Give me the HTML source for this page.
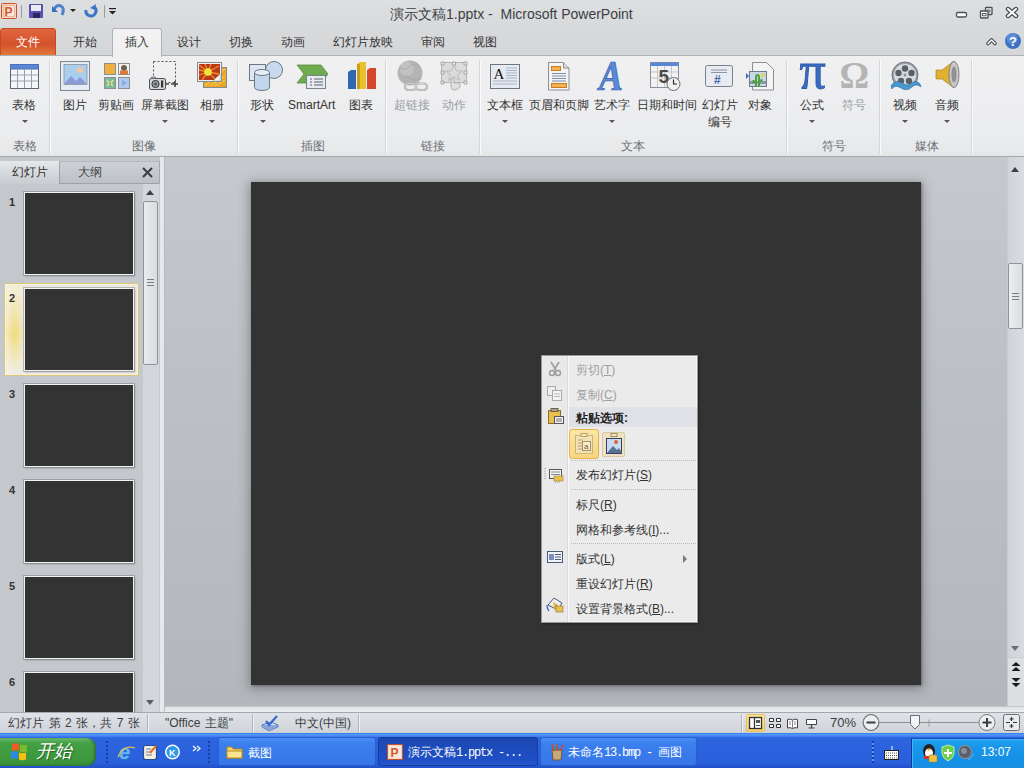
<!DOCTYPE html>
<html><head><meta charset="utf-8">
<style>
*{box-sizing:border-box}
html,body{margin:0;padding:0}
body{width:1024px;height:768px;overflow:hidden;position:relative;font-family:"Liberation Sans",sans-serif;font-size:12px;color:#333;background:#c2c6cb}
.a{position:absolute}
.t{position:absolute;white-space:nowrap;line-height:1}
.c{display:inline-block;width:1em;text-align:center;white-space:nowrap}
#title{left:0;top:0;width:1024px;height:56px;background:linear-gradient(#dedfe1,#d9dadc 40%,#d4d6d8)}
#ribbon{left:0;top:55px;width:1024px;height:102px;background:linear-gradient(#f0f0f1,#ebecee 80%,#e6e7e9);border-top:1px solid #aeb1b5;border-bottom:1px solid #a4a7ab}
.sep{position:absolute;top:60px;width:2px;height:94px;border-left:1px solid #d3d6da;border-right:1px solid #fbfbfc}
.glab{position:absolute;top:140px;color:#6d7075;font-size:12px;line-height:12px;white-space:nowrap}
.lab{position:absolute;top:99px;color:#333;font-size:12px;line-height:12px;white-space:nowrap}
.dis{color:#9a9da2}
.arr{position:absolute;width:0;height:0;border-left:3px solid transparent;border-right:3px solid transparent;border-top:3px solid #555}
.tab{position:absolute;top:36px;font-size:12px;line-height:12px;color:#333;white-space:nowrap}
#left{left:0;top:157px;width:160px;height:555px;background:#c4c7cb}
.thumb{position:absolute;left:24px;width:110px;height:83px;background:#333;border:1px solid #f2f2f2;box-shadow:0 0 0 1px rgba(90,94,100,.35),1px 1px 2px rgba(0,0,0,.25)}
.num{position:absolute;left:9px;font-weight:bold;font-size:11px;line-height:12px;color:#333}
#slide{left:251px;top:182px;width:670px;height:503px;background:#333333;box-shadow:0 2px 10px 2px rgba(70,74,80,.45),1px 1px 2px rgba(0,0,0,.3)}
#status{left:0;top:712px;width:1024px;height:21px;background:linear-gradient(#dfe2e6,#cfd3d8);border-top:1px solid #a4a8ae}
#task{left:0;top:733px;width:1024px;height:35px;background:linear-gradient(#3c81f3,#2d64e0 15%,#2a5fdc 85%,#2050c8)}
.mi{position:absolute;left:576px;font-size:12px;line-height:12px;color:#333;white-space:nowrap}
.msep{position:absolute;left:571px;width:125px;height:1px;border-top:1px dotted #b8bbc0}
</style></head><body>

<!-- title bar & tabs -->
<div id="title" class="a"></div>

<!-- QAT -->
<svg class="a" style="left:0;top:0" width="125" height="24">
 <rect x="1.5" y="3.5" width="15" height="15" rx="1" fill="#f4d8c4" stroke="#c9502a"/>
 <rect x="3.5" y="5.5" width="11" height="11" fill="#f8e6da" stroke="#e89870" stroke-width=".6"/>
 <text x="4.5" y="15.5" font-family="Liberation Sans" font-weight="bold" font-size="12" fill="#d4572a">P</text>
 <line x1="21.5" y1="5" x2="21.5" y2="18" stroke="#9a9ea4"/>
 <rect x="29" y="4" width="14" height="14" rx="1" fill="#5a4fb0"/>
 <rect x="31" y="5" width="10" height="6" fill="#e8ecf4"/>
 <rect x="33" y="13" width="7" height="5" fill="#2a2a60"/>
 <path d="M54 10 q2-6 7-4 q4 2 1 9" fill="none" stroke="#4a82d0" stroke-width="3"/>
 <path d="M52 6 l0 6 l6 0z" fill="#3a6fc0"/>
 <path d="M70 9 h6 l-3 3z" fill="#222"/>
 <path d="M86 10 a5 5 0 1 0 8 -3" fill="none" stroke="#3b73c9" stroke-width="3"/>
 <path d="M96 4 l-1 6 l-5 -2z" fill="#3b73c9"/>
 <line x1="104.5" y1="5" x2="104.5" y2="18" stroke="#9a9ea4"/>
 <rect x="109" y="8" width="7" height="1.2" fill="#222"/>
 <path d="M109 11 h7 l-3.5 3.5z" fill="#222"/>
</svg>
<!-- window controls -->
<svg class="a" style="left:950px;top:0" width="74" height="56">
 <rect x="6.5" y="12.5" width="10" height="4.5" rx="1.5" fill="#fff" stroke="#4a4d52" stroke-width="1.3"/>
 <rect x="35.5" y="7.5" width="6.5" height="7" rx=".5" fill="#fff" stroke="#4a4d52" stroke-width="1.3"/>
 <rect x="37.5" y="10" width="2.5" height="2" fill="none" stroke="#4a4d52" stroke-width=".9"/>
 <rect x="30.5" y="11" width="7.5" height="7" rx=".5" fill="#fff" stroke="#4a4d52" stroke-width="1.3"/>
 <rect x="32.5" y="13.5" width="3.5" height="2.3" fill="none" stroke="#4a4d52" stroke-width=".9"/>
 <path d="M58 9 l8 7 M66 9 l-8 7" stroke="#4a4d52" stroke-width="4.4" stroke-linecap="round"/>
 <path d="M58 9 l8 7 M66 9 l-8 7" stroke="#fff" stroke-width="2" stroke-linecap="round"/>
 <path d="M38 43.5 l3.5-3.5 l3.5 3.5" fill="none" stroke="#4a4d52" stroke-width="3.6" stroke-linecap="round" stroke-linejoin="round"/>
 <path d="M38 43.5 l3.5-3.5 l3.5 3.5" fill="none" stroke="#fff" stroke-width="1.4" stroke-linecap="round" stroke-linejoin="round"/>
 <circle cx="63" cy="41" r="8" fill="#3f72c4"/>
 <circle cx="62" cy="38.5" r="5.5" fill="#7aa4e4" opacity=".5"/>
 <text x="59" y="46" font-family="Liberation Sans" font-weight="bold" font-size="13" fill="#fff">?</text>
</svg>

<div class="t" style="left:390px;top:7px;font-size:14px;color:#3b3f45"><span class="c">演</span><span class="c">示</span><span class="c">文</span><span class="c">稿</span>1.pptx - &nbsp;Microsoft PowerPoint</div>

<div class="a" style="left:0;top:28px;width:56px;height:28px;background:linear-gradient(#e0673d,#d4512b 60%,#e07a3c);border-radius:3px 3px 0 0;border:1px solid #c24a25"></div>
<div class="tab" style="left:16px;color:#fff"><span class="c">文</span><span class="c">件</span></div>
<div class="a" style="left:112px;top:28px;width:50px;height:29px;background:linear-gradient(#f2f2f3,#f0f0f1);border:1px solid #aeb1b5;border-bottom:none;border-radius:3px 3px 0 0;z-index:2"></div>
<div class="tab" style="left:73px"><span class="c">开</span><span class="c">始</span></div>
<div class="tab" style="left:125px;z-index:3"><span class="c">插</span><span class="c">入</span></div>
<div class="tab" style="left:177px"><span class="c">设</span><span class="c">计</span></div>
<div class="tab" style="left:229px"><span class="c">切</span><span class="c">换</span></div>
<div class="tab" style="left:281px"><span class="c">动</span><span class="c">画</span></div>
<div class="tab" style="left:333px"><span class="c">幻</span><span class="c">灯</span><span class="c">片</span><span class="c">放</span><span class="c">映</span></div>
<div class="tab" style="left:421px"><span class="c">审</span><span class="c">阅</span></div>
<div class="tab" style="left:473px"><span class="c">视</span><span class="c">图</span></div>

<!-- ribbon -->
<div id="ribbon" class="a"></div>
<!-- ribbon separators -->
<div class="sep" style="left:49px"></div>
<div class="sep" style="left:237px"></div>
<div class="sep" style="left:385px"></div>
<div class="sep" style="left:479px"></div>
<div class="sep" style="left:786px"></div>
<div class="sep" style="left:879px"></div>
<div class="sep" style="left:971px"></div>
<!-- group labels -->
<div class="glab" style="left:13px"><span class="c">表</span><span class="c">格</span></div>
<div class="glab" style="left:132px"><span class="c">图</span><span class="c">像</span></div>
<div class="glab" style="left:301px"><span class="c">插</span><span class="c">图</span></div>
<div class="glab" style="left:421px"><span class="c">链</span><span class="c">接</span></div>
<div class="glab" style="left:621px"><span class="c">文</span><span class="c">本</span></div>
<div class="glab" style="left:822px"><span class="c">符</span><span class="c">号</span></div>
<div class="glab" style="left:915px"><span class="c">媒</span><span class="c">体</span></div>
<!-- labels -->
<div class="lab" style="left:12px"><span class="c">表</span><span class="c">格</span></div>
<div class="lab" style="left:63px"><span class="c">图</span><span class="c">片</span></div>
<div class="lab" style="left:98px"><span class="c">剪</span><span class="c">贴</span><span class="c">画</span></div>
<div class="lab" style="left:141px"><span class="c">屏</span><span class="c">幕</span><span class="c">截</span><span class="c">图</span></div>
<div class="lab" style="left:200px"><span class="c">相</span><span class="c">册</span></div>
<div class="lab" style="left:250px"><span class="c">形</span><span class="c">状</span></div>
<div class="lab" style="left:288px;font-size:12px">SmartArt</div>
<div class="lab" style="left:349px"><span class="c">图</span><span class="c">表</span></div>
<div class="lab dis" style="left:394px"><span class="c">超</span><span class="c">链</span><span class="c">接</span></div>
<div class="lab dis" style="left:442px"><span class="c">动</span><span class="c">作</span></div>
<div class="lab" style="left:487px"><span class="c">文</span><span class="c">本</span><span class="c">框</span></div>
<div class="lab" style="left:529px"><span class="c">页</span><span class="c">眉</span><span class="c">和</span><span class="c">页</span><span class="c">脚</span></div>
<div class="lab" style="left:594px"><span class="c">艺</span><span class="c">术</span><span class="c">字</span></div>
<div class="lab" style="left:637px"><span class="c">日</span><span class="c">期</span><span class="c">和</span><span class="c">时</span><span class="c">间</span></div>
<div class="lab" style="left:702px"><span class="c">幻</span><span class="c">灯</span><span class="c">片</span></div>
<div class="lab" style="left:708px;top:116px"><span class="c">编</span><span class="c">号</span></div>
<div class="lab" style="left:748px"><span class="c">对</span><span class="c">象</span></div>
<div class="lab" style="left:800px"><span class="c">公</span><span class="c">式</span></div>
<div class="lab dis" style="left:842px"><span class="c">符</span><span class="c">号</span></div>
<div class="lab" style="left:893px"><span class="c">视</span><span class="c">频</span></div>
<div class="lab" style="left:935px"><span class="c">音</span><span class="c">频</span></div>
<!-- dropdown arrows -->
<div class="arr" style="left:22px;top:120px"></div>
<div class="arr" style="left:162px;top:120px"></div>
<div class="arr" style="left:209px;top:120px"></div>
<div class="arr" style="left:260px;top:120px"></div>
<div class="arr" style="left:502px;top:120px"></div>
<div class="arr" style="left:609px;top:120px"></div>
<div class="arr" style="left:809px;top:120px"></div>
<div class="arr" style="left:902px;top:120px"></div>
<div class="arr" style="left:944px;top:120px"></div>

<!-- icons -->
<svg class="a" style="left:0;top:56px" width="1024" height="40">
 <!-- table -->
 <rect x="10.5" y="8.5" width="28" height="24" fill="#f4f6f9" stroke="#5f6671"/>
 <rect x="10.5" y="8.5" width="28" height="4.5" fill="#5a86d6" stroke="#4a6fb8"/>
 <path d="M17.5 13v19 M24.5 13v19 M31.5 13v19 M11 19h27 M11 25h27" stroke="#9aa1ab"/>
 <!-- picture -->
 <rect x="60.5" y="5.5" width="29" height="29" fill="#e6ecf3" stroke="#7d8590"/>
 <rect x="64" y="8.5" width="23" height="20" fill="#a8d0ee" stroke="#8a929c" stroke-width=".8"/>
 <circle cx="80" cy="14" r="3" fill="#f6c79a"/>
 <path d="M64 28 l7-8 l5 5 l4-4 l7 7z" fill="#8d9ad8"/>
 <!-- clip art -->
 <rect x="104.5" y="7.5" width="11" height="11" fill="#f0b040" stroke="#8a8f96"/>
 <rect x="118.5" y="7.5" width="11" height="11" fill="#f8f0ea" stroke="#8a8f96"/>
 <circle cx="124" cy="12" r="3" fill="#6b6055"/><rect x="120" y="14.5" width="8" height="4" fill="#d87b3a"/>
 <rect x="104.5" y="21.5" width="11" height="11" fill="#78b8a0" stroke="#8a8f96"/>
 <path d="M107 24l2 3M113 24l-2 3M107 30l2-2M113 30l-2-2" stroke="#f3e07a" stroke-width="1.6"/>
 <rect x="118.5" y="21.5" width="11" height="11" fill="#b0c8f0" stroke="#8a8f96"/>
 <path d="M122 24 l5 3 l-5 3z" fill="#8aa8e0"/>
 <!-- screenshot -->
 <rect x="153.5" y="5.5" width="22" height="21" fill="none" stroke="#555" stroke-dasharray="2 2"/>
 <rect x="149.5" y="22.5" width="16" height="11" rx="1.5" fill="#d4d6d9" stroke="#505458"/>
 <rect x="151" y="20.5" width="5" height="2" fill="#8a8e92"/>
 <circle cx="155.5" cy="28" r="3.6" fill="#9a9ea2" stroke="#333"/>
 <circle cx="155.5" cy="28" r="1.5" fill="#555"/>
 <rect x="161" y="24.5" width="2.2" height="7" fill="#333"/>
 <path d="M166 28h3 M171 28h7 M175 25v6" stroke="#444" stroke-width="1.6"/>
 <!-- album -->
 <rect x="203.5" y="11.5" width="23" height="20" fill="#e8a825" stroke="#868a90"/>
 <path d="M205 30 l20 -17 M210 30 l15 -10 M215 30 l10 -6" stroke="#f4c850" stroke-width="1.2"/>
 <rect x="197.5" y="6.5" width="24" height="19" fill="#f0f0f0" stroke="#868a90"/>
 <rect x="199" y="8" width="21" height="16" fill="#b83a18"/>
 <g stroke="#f08a30" stroke-width="1.3">
 <path d="M208 16 l-9 -7 M208 16 l-9 3 M208 16 l-6 8 M208 16 l3 -8 M208 16 l11 -6 M208 16 l11 2 M208 16 l8 8 M208 16 l-3 -8 M208 16 l-9 -2"/>
 </g>
 <circle cx="208" cy="16" r="3.8" fill="#f4e438"/>
 <path d="M213 25 l7-7 v7z" fill="#f8f8f8" stroke="#a0a0a0" stroke-width=".6"/>
 <!-- shapes -->
 <circle cx="274" cy="14" r="8.5" fill="#c8d8ee" stroke="#6d7785"/>
 <rect x="249.5" y="8.5" width="16" height="16" fill="#dde6f2" stroke="#6d7785"/>
 <path d="M254.5 16.5 v15 a7.5 3 0 0 0 15 0 v-15" fill="#c2d6ee" stroke="#6d7785"/>
 <ellipse cx="262" cy="16.5" rx="7.5" ry="3" fill="#e6eef8" stroke="#6d7785"/>
 <!-- smartart -->
 <path d="M297 9 h24 l7 9 l-7 9 h-24 l7-9z" fill="#6eaa4e" stroke="#5a8c40" stroke-width=".8"/>
 <rect x="306.5" y="19.5" width="19" height="13" fill="#e8ecef" stroke="#7c848e"/>
 <path d="M310 23h2 M314 23h9 M310 26h2 M314 26h9 M310 29h2 M314 29h9" stroke="#5a6370"/>
 <!-- chart -->
 <path d="M348 16 l3-2 h5 v19 h-8z" fill="#2f68b0"/>
 <path d="M357 8 l3-2 h6 v27 h-9z" fill="#e8c22a"/>
 <rect x="357" y="8" width="3" height="25" fill="#c9a018"/>
 <path d="M367 14 l3-2 h6 v21 h-9z" fill="#d6462a"/>
 <!-- hyperlink (disabled) -->
 <circle cx="410" cy="17" r="12.5" fill="#b4b4b4"/>
 <circle cx="407" cy="13" r="7" fill="#c8c8c8" opacity=".7"/>
 <path d="M400 12q6 3 10-2q4-4 9 1M402 22q5-3 9 1q4 3 10-1" fill="none" stroke="#a4a4a4" stroke-width=".8"/>
 <rect x="405" y="27.5" width="11" height="6.5" rx="3.2" fill="none" stroke="#a8a8a8" stroke-width="2.2"/>
 <rect x="416" y="27.5" width="11" height="6.5" rx="3.2" fill="none" stroke="#a8a8a8" stroke-width="2.2"/>
 <rect x="405" y="27.5" width="11" height="6.5" rx="3.2" fill="none" stroke="#dedede" stroke-width=".8"/>
 <rect x="416" y="27.5" width="11" height="6.5" rx="3.2" fill="none" stroke="#dedede" stroke-width=".8"/>
 <!-- action (disabled) -->
 <rect x="441.5" y="6.5" width="25" height="20" fill="#dcdcdc" stroke="#a8a8a8" stroke-width=".8"/>
 <path d="M441 6h3v3h-3zM452.5 6h3v3h-3zM464 6h3v3h-3zM441 15h3v3h-3zM464 15h3v3h-3zM441 25h3v3h-3zM464 25h3v3h-3z" fill="#e8e8e8" stroke="#999" stroke-width=".8"/>
 <path d="M454 9 l2.5 6 h6 l-5 3.5 l2 6 l-5.5-4 l-5.5 4 l2-6 l-5-3.5 h6z" fill="none" stroke="#bbb"/>
 <path d="M451 30 v-7 q1.5-2 3 0 v4 q3-1 6 1 v3 q-2 3-6 3 q-3 0-3-4z" fill="#e0e0e0" stroke="#a5a5a5" stroke-width=".8"/>
 <!-- text box -->
 <rect x="490.5" y="8.5" width="29" height="24" fill="#e6eaf2" stroke="#6e7680"/>
 <text x="493.5" y="23" font-family="Liberation Serif" font-size="15" fill="#111">A</text>
 <path d="M506 12h11 M506 14.5h11 M506 17h11 M506 19.5h11 M506 22h11 M493 25h24 M493 28h24" stroke="#98a4b8" stroke-width=".8"/>
 <!-- header footer -->
 <path d="M548.5 6.5 h15 l5.5 5.5 v22 h-20.5z" fill="#f4f4f4" stroke="#8a8f96"/>
 <path d="M563.5 6.5 v5.5 h5.5" fill="#ddd" stroke="#8a8f96"/>
 <rect x="551.5" y="10.5" width="9" height="4" fill="#f1b352" stroke="#d07a20"/>
 <path d="M552 17.5h14 M552 20h14 M552 22.5h14 M552 25h14" stroke="#7a8aa8"/>
 <rect x="551.5" y="27.5" width="15" height="4" fill="#f1b352" stroke="#d07a20"/>
 <!-- wordart -->
 <text transform="translate(599 34) scale(.85 1)" font-family="Liberation Serif" font-weight="bold" font-style="italic" font-size="42" fill="#5a8ad8" stroke="#2f5aa0" stroke-width=".7">A</text>
 <!-- date time -->
 <rect x="650.5" y="6.5" width="28" height="25" fill="#f2f2f2" stroke="#8a8f96"/>
 <rect x="650.5" y="6.5" width="28" height="3.5" fill="#5a86d6"/>
 <path d="M657.5 10v21 M664.5 10v21 M671.5 10v21 M651 16h27 M651 22h27" stroke="#c2c6cc"/>
 <text x="658.5" y="26.5" font-family="Liberation Sans" font-weight="bold" font-size="19" fill="#4a4a4a">5</text>
 <circle cx="673.5" cy="28" r="6.5" fill="#f0f0f0" stroke="#6a6e74"/>
 <path d="M673.5 23.5v4.5h3.5" stroke="#222" fill="none" stroke-width="1.1"/>
 <!-- slide number -->
 <rect x="705.5" y="9.5" width="27" height="21" rx="2" fill="#e8ecf2" stroke="#7a818a"/>
 <path d="M711 14h16 M711 16.5h16" stroke="#8894a8"/>
 <text x="714" y="28" font-family="Liberation Sans" font-weight="bold" font-size="12" fill="#4a68a8">#</text>
 <!-- object -->
 <path d="M752.5 6.5 h14 l7 7 v20.5 h-21z" fill="#f4f4f4" stroke="#8a8f96"/>
 <rect x="749.5" y="15.5" width="17" height="15" fill="#c8d8e8" stroke="#6f7a88"/>
 <rect x="750" y="25" width="16" height="3" fill="#8a9ab0"/>
 <path d="M756 31v-10q0-2 1.5-2t1.5 2v10M753.5 24v2h2.5M761.5 23v2h-2.5" stroke="#50a040" stroke-width="2" fill="none"/>
 <circle cx="763" cy="19" r="2" fill="#e8d050"/>
 <path d="M746 17 l3 3 l-3 3z" fill="#3a6fc0"/>
 <!-- pi -->
 <text transform="translate(799.5 32.2)" font-family="Liberation Serif" font-size="52" fill="#3a6cc2" stroke="#2d5aa8" stroke-width=".9">π</text>
 <!-- omega -->
 <text x="839.5" y="32" font-family="Liberation Serif" font-weight="bold" font-size="37" fill="#b4b4b4">Ω</text>
 <!-- video -->
 <g transform="translate(0 2)">
 <circle cx="905" cy="17" r="13" fill="#9aa0a6" stroke="#70767d"/>
 <circle cx="905" cy="17" r="11" fill="#d8dce0"/>
 <circle cx="905" cy="10.5" r="3.2" fill="#5a6068"/><circle cx="911.5" cy="15" r="3.2" fill="#5a6068"/><circle cx="909" cy="23" r="3.2" fill="#5a6068"/><circle cx="901" cy="23" r="3.2" fill="#5a6068"/><circle cx="898.5" cy="15" r="3.2" fill="#5a6068"/>
 <circle cx="905" cy="17" r="1.5" fill="#8a9098"/>
 <path d="M891 28 q4-7 11-3 q6 4 10 0 q4-4 8 1 l1 3 q-5-4-9 0 q-5 5-11 1 q-6-4-9 1z" fill="#4a98d0" stroke="#2a6aa0" stroke-width=".6"/>
 </g>
 <!-- audio -->
 <path d="M936 14 h6 l12-9 v27 l-12-9 h-6z" fill="#e0b030" stroke="#9a7a20" stroke-width=".6"/>
 <ellipse cx="954" cy="18.5" rx="5" ry="13" fill="#c8c8c8" stroke="#808080"/>
 <ellipse cx="954" cy="18.5" rx="2.5" ry="8" fill="#909090"/>
</svg>


<!-- left panel -->
<div id="left" class="a"></div>
<!-- left panel tabs -->
<div class="a" style="left:0;top:161px;width:60px;height:23px;background:linear-gradient(#e6e8eb,#d3d6da 60%,#c9cdd1)"></div>
<div class="a" style="left:59px;top:161px;width:61px;height:23px;background:linear-gradient(#cdd1d5,#bdc1c6);border:1px solid #9fa3a9;border-top-color:#b5b9be"></div>
<div class="a" style="left:119px;top:161px;width:41px;height:23px;background:linear-gradient(#cdd1d5,#bdc1c6);border-bottom:1px solid #9fa3a9;border-top:1px solid #b5b9be;border-right:1px solid #a5a9ae"></div>
<div class="t" style="left:12px;top:166px;color:#333"><span class="c">幻</span><span class="c">灯</span><span class="c">片</span></div>
<div class="t" style="left:78px;top:166px;color:#444"><span class="c">大</span><span class="c">纲</span></div>
<svg class="a" style="left:141px;top:166px" width="14" height="14"><path d="M2 2l9 9M11 2l-9 9" stroke="#3a3d42" stroke-width="2"/></svg>
<!-- scrollbar -->
<div class="a" style="left:142px;top:184px;width:17px;height:528px;background:#d3d6da;border-left:1px solid #c4c8cc"></div>
<div class="a" style="left:146px;top:190px;width:0;height:0;border-left:4px solid transparent;border-right:4px solid transparent;border-bottom:5px solid #3c4046"></div>
<div class="a" style="left:143px;top:201px;width:15px;height:164px;background:linear-gradient(90deg,#e9ebee,#d8dbdf);border:1px solid #8f949a;border-radius:2px"></div>
<div class="a" style="left:147px;top:279px;width:7px;height:7px;border-top:1px solid #7a7e84;border-bottom:1px solid #7a7e84;background:linear-gradient(#0000 2px,#7a7e84 2px,#7a7e84 3px,#0000 3px)"></div>
<div class="a" style="left:146px;top:700px;width:0;height:0;border-left:4px solid transparent;border-right:4px solid transparent;border-top:5px solid #5a5e64"></div>
<!-- selected highlight -->
<div class="a" style="left:4px;top:283px;width:135px;height:93px;border:1px solid #dcc878;border-radius:2px;background:#ebe9e1;box-shadow:inset 0 0 0 1px #f6f2e2"></div>
<div class="a" style="left:5px;top:284px;width:18px;height:91px;background:linear-gradient(90deg,rgba(246,244,236,.7),rgba(246,244,236,0) 45%,rgba(246,244,236,0) 65%,rgba(236,236,230,.6)),linear-gradient(#f4eed8,#f2e6b0 30%,#f0dc84 55%,#f2e6b8 78%,#eeeee6)"></div>
<!-- thumbs -->
<div class="thumb" style="top:192px"></div>
<div class="thumb" style="top:288px"></div>
<div class="thumb" style="top:384px"></div>
<div class="thumb" style="top:480px"></div>
<div class="thumb" style="top:576px"></div>
<div class="thumb" style="top:672px;height:40px;border-bottom:none"></div>
<div class="num" style="top:196px">1</div>
<div class="num" style="top:292px">2</div>
<div class="num" style="top:388px">3</div>
<div class="num" style="top:484px">4</div>
<div class="num" style="top:580px">5</div>
<div class="num" style="top:676px">6</div>


<!-- main -->
<div class="a" style="left:165px;top:157px;width:842px;height:549px;background:linear-gradient(#c5c8cc,#bdc0c4 40%,#b3b6ba)"></div>
<div class="a" style="left:160px;top:157px;width:5px;height:555px;background:#e6e8eb;border-right:1px solid #b7bbc0"></div>
<div id="slide" class="a"></div>
<!-- right scrollbar -->
<div class="a" style="left:1007px;top:157px;width:17px;height:549px;background:linear-gradient(90deg,#d0d3d7,#d8dbdf);border-left:1px solid #c8ccd0"></div>
<div class="a" style="left:1011px;top:167px;width:0;height:0;border-left:4.5px solid transparent;border-right:4.5px solid transparent;border-bottom:5px solid #3c4046"></div>
<div class="a" style="left:1008px;top:263px;width:15px;height:66px;background:linear-gradient(90deg,#eceef0,#dadde1);border:1px solid #8f949a;border-radius:2px"></div>
<div class="a" style="left:1012px;top:293px;width:7px;height:7px;border-top:1px solid #7a7e84;border-bottom:1px solid #7a7e84;background:linear-gradient(#0000 2px,#7a7e84 2px,#7a7e84 3px,#0000 3px)"></div>
<div class="a" style="left:1011px;top:646px;width:0;height:0;border-left:4.5px solid transparent;border-right:4.5px solid transparent;border-top:5px solid #6a6e74"></div>
<div class="a" style="left:1008px;top:657px;width:16px;height:49px;background:#dcdfe2;border-top:1px solid #c8ccd0"></div>
<svg class="a" style="left:1009px;top:660px" width="14" height="30">
 <path d="M7 2l4.5 4h-9z M7 7l4.5 4h-9z" fill="#1a1a1a"/>
 <path d="M2.5 18h9l-4.5 4z M2.5 23h9l-4.5 4z" fill="#1a1a1a"/>
</svg>
<div class="a" style="left:165px;top:706px;width:859px;height:6px;background:linear-gradient(#dfe1e4,#eceef0);border-top:1px solid #c4c7cb"></div>
<!-- context menu -->
<div class="a" style="left:541px;top:355px;width:157px;height:268px;background:#ebebeb;border:1px solid #979797;box-shadow:inset 1px 1px 0 #f8f8f8,inset -1px -1px 0 #f8f8f8,1px 1px 2px rgba(0,0,0,.3)"></div>
<div class="a" style="left:542px;top:356px;width:26px;height:266px;background:#e9e9ea;border-right:1px solid #dadadd"></div>
<div class="a" style="left:568px;top:356px;width:1px;height:266px;background:#fafafa"></div>
<div class="a" style="left:569px;top:407px;width:128px;height:20px;background:#dfe1e6"></div>
<div class="mi dis" style="top:364px;color:#a0a0a0"><span class="c">剪</span><span class="c">切</span>(<u>T</u>)</div>
<div class="mi dis" style="top:389px;color:#a0a0a0"><span class="c">复</span><span class="c">制</span>(<u>C</u>)</div>
<div class="mi" style="top:412px;font-weight:bold;color:#222"><span class="c">粘</span><span class="c">贴</span><span class="c">选</span><span class="c">项</span>:</div>
<div class="mi" style="top:469px"><span class="c">发</span><span class="c">布</span><span class="c">幻</span><span class="c">灯</span><span class="c">片</span>(<u>S</u>)</div>
<div class="mi" style="top:499px"><span class="c">标</span><span class="c">尺</span>(<u>R</u>)</div>
<div class="mi" style="top:524px"><span class="c">网</span><span class="c">格</span><span class="c">和</span><span class="c">参</span><span class="c">考</span><span class="c">线</span>(<u>I</u>)...</div>
<div class="mi" style="top:553px"><span class="c">版</span><span class="c">式</span>(<u>L</u>)</div>
<div class="mi" style="top:578px"><span class="c">重</span><span class="c">设</span><span class="c">幻</span><span class="c">灯</span><span class="c">片</span>(<u>R</u>)</div>
<div class="mi" style="top:603px"><span class="c">设</span><span class="c">置</span><span class="c">背</span><span class="c">景</span><span class="c">格</span><span class="c">式</span>(<u>B</u>)...</div>
<div class="msep" style="top:460px"></div>
<div class="msep" style="top:489px"></div>
<div class="msep" style="top:543px"></div>
<div class="a" style="left:683px;top:555px;width:0;height:0;border-top:4px solid transparent;border-bottom:4px solid transparent;border-left:4px solid #7a7a7a"></div>
<!-- paste buttons -->
<div class="a" style="left:569px;top:429px;width:30px;height:30px;border:1px solid #e5b54a;border-radius:3px;background:linear-gradient(#fbe6a6,#f6d680)"></div>
<svg class="a" style="left:572px;top:432px" width="24" height="24">
 <rect x="3.5" y="3.5" width="17" height="18" fill="#f3e2b6" stroke="#cfb274"/>
 <rect x="9" y="1.5" width="6" height="3" fill="#f6e8c0" stroke="#bca060"/>
 <path d="M6 8h5M6 11h5M6 14h5M6 17h5" stroke="#b8a070"/>
 <rect x="10.5" y="9.5" width="8" height="9" fill="#f6ecd0" stroke="#a89060"/>
 <text x="12" y="17" font-family="Liberation Sans" font-size="8" fill="#6a5a3a">a</text>
</svg>
<div class="a" style="left:602px;top:432px;width:23px;height:25px;border:1px solid #d8c8a4;border-radius:2px;background:#f0e2c0"></div>
<svg class="a" style="left:602px;top:432px" width="24" height="25">
 <rect x="9" y="1.5" width="6" height="3" fill="#f6e8c0" stroke="#a08a60"/>
 <rect x="4.5" y="6.5" width="15" height="15" fill="#c8dcf0" stroke="#30406a"/>
 <path d="M5 21l6-7 4 4 2-2 3 5z" fill="#5a7090"/>
 <circle cx="14" cy="10" r="2" fill="#e06040"/>
</svg>
<!-- menu icons -->
<svg class="a" style="left:543px;top:358px" width="25" height="262">
 <path d="M8 4l5 8M16 4l-5 8" stroke="#9c9c9c" stroke-width="1.6"/>
 <circle cx="9" cy="15" r="2.5" fill="none" stroke="#9c9c9c" stroke-width="1.4"/>
 <circle cx="15" cy="15" r="2.5" fill="none" stroke="#9c9c9c" stroke-width="1.4"/>
 <rect x="4.5" y="28.5" width="8" height="9" fill="#eee" stroke="#aaa"/>
 <rect x="9.5" y="32.5" width="9" height="10" fill="#f4f4f4" stroke="#aaa"/>
 <path d="M11 36h6M11 38.5h6" stroke="#bbb"/>
 <rect x="5.5" y="52.5" width="12" height="13" fill="#e8c050" stroke="#8a7030"/>
 <rect x="8" y="50.5" width="7" height="3" fill="#b0a080" stroke="#6a6050"/>
 <rect x="11.5" y="58.5" width="9" height="7" fill="#f0f0f0" stroke="#555"/>
 <path d="M13 61h6M13 63h6" stroke="#777"/>
 <rect x="6.5" y="111.5" width="12" height="9" fill="#f4f4f4" stroke="#555"/>
 <path d="M8 114h9M8 116.5h9" stroke="#889"/>
 <rect x="11" y="118" width="9" height="5" fill="#e8c050" stroke="#a08030" stroke-width=".6"/>
 <path d="M2 110v12" stroke="#888" stroke-dasharray="1 1.5"/>
 <path d="M12 124h6" stroke="#6a6" stroke-dasharray="1 1"/>
 <rect x="4.5" y="193.5" width="15" height="11" fill="#f0f2f6" stroke="#4a5a7a"/>
 <rect x="6" y="196" width="5" height="6" fill="#7a90b8"/>
 <path d="M12 196.5h6M12 199h6M12 201.5h6" stroke="#4a5a7a"/>
 <path d="M5 247l6-7 8 5-4 7z" fill="#f0f0f0" stroke="#4a5a7a"/>
 <path d="M10 244l5 3-3 6" fill="#e0b040"/>
 <rect x="13" y="248" width="7" height="6" fill="#e8c050" stroke="#8a7030" stroke-width=".6"/>
 <path d="M4 247q0 4 2 6" stroke="#4a7ac0" fill="none" stroke-width="1.5"/>
</svg>


<!-- status -->
<div id="status" class="a"></div>
<!-- status bar content -->
<div class="t" style="left:8px;top:717px;color:#3a3d42;word-spacing:1.2px"><span class="c">幻</span><span class="c">灯</span><span class="c">片</span> <span class="c">第</span> 2 <span class="c">张</span><span class="c">，</span><span class="c">共</span> 7 <span class="c">张</span></div>
<div class="a" style="left:147px;top:714px;width:2px;height:18px;border-left:1px solid #b0b4b9;border-right:1px solid #eef0f2"></div>
<div class="t" style="left:165px;top:717px;color:#3a3d42;word-spacing:1px">"Office <span class="c">主</span><span class="c">题</span>"</div>
<div class="a" style="left:252px;top:714px;width:2px;height:18px;border-left:1px solid #b0b4b9;border-right:1px solid #eef0f2"></div>
<svg class="a" style="left:260px;top:714px" width="20" height="18">
 <path d="M2 11l7 4l9-4l-7-3z" fill="#d8e2f4" stroke="#5a78c0"/>
 <path d="M2 11v2l7 4l9-4v-2" fill="#8aa6dc" stroke="#5a78c0" stroke-width=".8"/>
 <path d="M6 7l3 4l8-9" fill="none" stroke="#3a6ad0" stroke-width="2.2"/>
</svg>
<div class="t" style="left:295px;top:717px;color:#3a3d42"><span class="c">中</span><span class="c">文</span>(<span class="c">中</span><span class="c">国</span>)</div>
<div class="a" style="left:358px;top:714px;width:2px;height:18px;border-left:1px solid #b0b4b9;border-right:1px solid #eef0f2"></div>
<div class="a" style="left:741px;top:714px;width:2px;height:18px;border-left:1px solid #b0b4b9;border-right:1px solid #eef0f2"></div>
<div class="a" style="left:746px;top:714px;width:19px;height:18px;border:1px solid #e5c060;border-radius:2px;background:linear-gradient(#fbe59a,#f6d06a)"></div>
<svg class="a" style="left:746px;top:714px" width="80" height="18">
 <rect x="3.5" y="3.5" width="12" height="11" fill="#fff" stroke="#333" stroke-width="1.3"/>
 <path d="M8.5 4v10" stroke="#333" stroke-width="1.3"/>
 <rect x="10" y="6" width="4" height="3" fill="#555"/>
 <path d="M10 11.5h4" stroke="#555"/>
 <path d="M23.5 4.5h4v3h-4zM30.5 4.5h4v3h-4zM23.5 10.5h4v3h-4zM30.5 10.5h4v3h-4z" fill="#fff" stroke="#333"/>
 <path d="M41.5 5.5q2.5-1 5 .5q2.5-1.5 5-.5v8.5q-2.5-1-5 .5q-2.5-1.5-5-.5z" fill="#fff" stroke="#444"/>
 <path d="M46.5 6v8.5M43 8h2M43 10h2M48 8h2M48 10h2" stroke="#666" stroke-width=".8"/>
 <path d="M60.5 5.5h10v5h-10z" fill="#fff" stroke="#444"/>
 <path d="M65.5 10.5v3.5M62.5 14h6" stroke="#444" stroke-width="1.2"/>
</svg>
<div class="t" style="left:830px;top:716px;font-size:13px;color:#3a3d42">70%</div>
<svg class="a" style="left:860px;top:712px" width="164" height="21">
 <path d="M19 10.5h100" stroke="#8d9197"/>
 <circle cx="11" cy="10.5" r="8" fill="linear-gradient" stroke="#777b80"/>
 <circle cx="11" cy="10.5" r="7.4" fill="#eceef0"/>
 <path d="M6.5 10.5h9" stroke="#3a3d42" stroke-width="2"/>
 <path d="M69 7.5v7" stroke="#9a9ea4"/>
 <path d="M50.5 3.5h9v9l-4.5 4.5l-4.5-4.5z" fill="#f4f5f6" stroke="#6a6e74"/>
 <circle cx="127" cy="10.5" r="8" fill="#eceef0" stroke="#777b80"/>
 <path d="M122.5 10.5h9M127 6v9" stroke="#3a3d42" stroke-width="2"/>
 <rect x="143.5" y="2.5" width="16" height="16" rx="2" fill="#e8eaec" stroke="#6a6e74"/>
 <path d="M151.5 5v4M149.5 7h4M151.5 12v4M149.5 14h4M146 10.5h4M157 10.5h-4" stroke="#333" stroke-width="1.2"/>
</svg>


<!-- taskbar -->
<div id="task" class="a"></div>
<!-- taskbar -->
<div class="a" style="left:0;top:734px;width:1024px;height:3px;background:linear-gradient(#5a9af8,#3a7cf0)"></div>
<div class="a" style="left:0;top:738px;width:96px;height:28px;border-radius:0 9px 9px 0;background:linear-gradient(#6cbc6c,#44a044 18%,#3d983d 80%,#358a35);box-shadow:inset -2px 0 2px rgba(0,0,0,.25)"></div>
<svg class="a" style="left:9px;top:741px" width="22" height="21">
 <path d="M3 3q3-1.5 7 0v7q-4-1.5-7 0z" fill="#f05a24"/>
 <path d="M11 3.5q3 1.5 7 0v7q-4 1.5-7 0z" fill="#7cbc2c"/>
 <path d="M2 11q3-1.5 7 0v7q-4-1.5-7 0z" fill="#2a8ae8"/>
 <path d="M10 11.5q3 1.5 7 0v7q-4 1.5-7 0z" fill="#f8c010"/>
</svg>
<div class="t" style="left:36px;top:742px;font-size:18px;font-style:italic;color:#fff;text-shadow:1px 1px 1px rgba(20,60,20,.6)"><span class="c">开</span><span class="c">始</span></div>
<div class="a" style="left:106px;top:741px;width:2px;height:22px;background:repeating-linear-gradient(#16409a 0 2px,transparent 2px 4px)"></div>
<svg class="a" style="left:116px;top:742px" width="90" height="20">
 <text x="3" y="17" font-family="Liberation Sans" font-weight="bold" font-style="italic" font-size="20" fill="#6ab4f8" stroke="#2a70d8" stroke-width="1.8" paint-order="stroke">e</text>
 <path d="M2 15q5-13 17-9" fill="none" stroke="#e8c040" stroke-width="1.2"/>
 <rect x="27.5" y="3.5" width="13" height="14" rx="2" fill="#f4f0e0" stroke="#2a4a90" stroke-width="1.2"/>
 <path d="M30 7h5M30 10h4M30 13h6" stroke="#6a7aa0"/>
 <path d="M34 11l6-7" stroke="#e07020" stroke-width="2"/>
 <circle cx="56.5" cy="10" r="7.5" fill="#fff"/>
 <circle cx="56.5" cy="10" r="6" fill="#2a9ae8"/>
 <text x="53" y="14" font-family="Liberation Sans" font-weight="bold" font-size="9" fill="#fff">K</text>
 <path d="M77 4l3 2.5-3 2.5M81 4l3 2.5-3 2.5" fill="none" stroke="#fff" stroke-width="1.2"/>
</svg>
<div class="a" style="left:208px;top:741px;width:2px;height:22px;background:repeating-linear-gradient(#16409a 0 2px,transparent 2px 4px)"></div>
<div class="a" style="left:218px;top:737px;width:158px;height:29px;border-radius:3px;background:linear-gradient(#4a8ef4,#3c7fee 20%,#3776e6);border:1px solid #2a5ec8"></div>
<svg class="a" style="left:226px;top:744px" width="18" height="15"><path d="M1 3h5l1 2h9v9h-15z" fill="#f8d870" stroke="#b08a20"/><path d="M1 7h15v7h-15z" fill="#fae490" stroke="#b08a20"/></svg>
<div class="t" style="left:248px;top:747px;color:#fff"><span class="c">截</span><span class="c">图</span></div>
<div class="a" style="left:378px;top:737px;width:160px;height:29px;border-radius:3px;background:linear-gradient(#1c48b4,#1e4fc4 80%,#2456cc);border:1px solid #163c9a"></div>
<svg class="a" style="left:387px;top:744px" width="16" height="16"><rect x=".5" y=".5" width="15" height="15" fill="#f4d8c4" stroke="#c9502a"/><rect x="2" y="2" width="12" height="12" fill="#f8e8dc"/><text x="3.5" y="13" font-family="Liberation Sans" font-weight="bold" font-size="12" fill="#d4572a">P</text></svg>
<div class="t" style="left:408px;top:747px;color:#fff;font-family:'Liberation Mono',monospace"><span class="c">演</span><span class="c">示</span><span class="c">文</span><span class="c">稿</span><span style="letter-spacing:-1.2px">1.pptx -...</span></div>
<div class="a" style="left:540px;top:737px;width:157px;height:29px;border-radius:3px;background:linear-gradient(#4a8ef4,#3c7fee 20%,#3776e6);border:1px solid #2a5ec8"></div>
<svg class="a" style="left:549px;top:743px" width="16" height="18"><path d="M3 7h10l-1 10h-8z" fill="#c8a878" stroke="#6a5a3a"/><path d="M5 8l-2-7M8 8l0-7M11 8l3-6" stroke="#e04030" stroke-width="1.4"/><path d="M6 8l1-6" stroke="#40a040" stroke-width="1.4"/></svg>
<div class="t" style="left:568px;top:747px;color:#fff;font-family:'Liberation Mono',monospace"><span class="c">未</span><span class="c">命</span><span class="c">名</span><span style="letter-spacing:-1.2px">13.bmp - </span><span class="c">画</span><span class="c">图</span></div>
<div class="a" style="left:872px;top:741px;width:2px;height:22px;background:repeating-linear-gradient(#16409a 0 2px,#5a9af0 2px 4px)"></div>
<svg class="a" style="left:884px;top:746px" width="16" height="15"><path d="M8 0v4" stroke="#fff"/><rect x=".5" y="4.5" width="14" height="9" fill="#fff" stroke="#222"/><path d="M2 7h11M2 9.5h11M2 12h11" stroke="#555" stroke-dasharray="1 1"/></svg>
<div class="a" style="left:911px;top:738px;width:113px;height:30px;background:linear-gradient(#22a2f0,#1896ea 30%,#1390e6 80%,#1a8ee0);border-left:1px solid #0a3a98;border-top:1px solid #0a50b8;box-shadow:inset 1px 1px 0 #48b4f8"></div>
<svg class="a" style="left:920px;top:743px" width="56" height="20">
 <ellipse cx="9" cy="8" rx="6" ry="7" fill="#222"/>
 <ellipse cx="9" cy="10" rx="4" ry="4.5" fill="#fff"/>
 <path d="M4 13h10v3h-10z" fill="#d83020"/>
 <path d="M7 6l4 0l-2 2z" fill="#f0b020"/>
 <rect x="9" y="12" width="8" height="7" rx="1" fill="#f0c040" stroke="#a08030" stroke-width=".6"/>
 <path d="M22 4l6-2l6 2v6q0 5-6 8q-6-3-6-8z" fill="#6ad04a" stroke="#c8e8a0"/>
 <path d="M28 6v8M24 10h8" stroke="#fff" stroke-width="2"/>
 <circle cx="45" cy="9" r="6.5" fill="#5a5e68" stroke="#999"/>
 <circle cx="44" cy="8" r="3" fill="#8a8e98"/>
 <path d="M48 17q4-2 6-6" stroke="#7ab0e0" fill="none"/>
</svg>
<div class="t" style="left:981px;top:746px;color:#fff;font-size:12px">13:07</div>


</body></html>
